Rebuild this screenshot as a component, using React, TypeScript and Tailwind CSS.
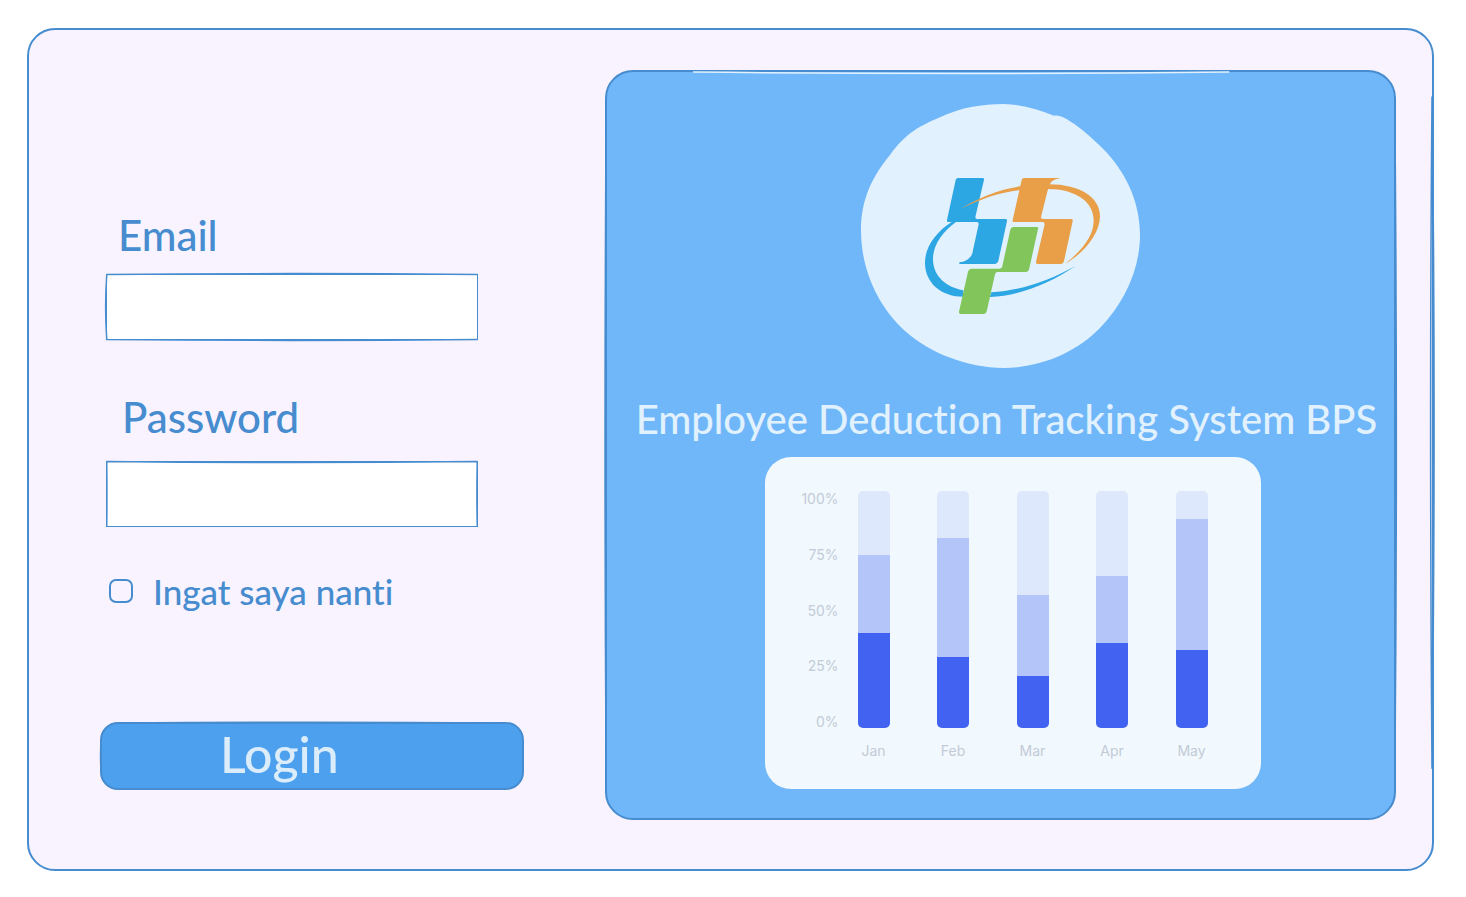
import type { ReactNode } from "react";

const MONTHS = [
  { label: "Jan", paid: 40, pending: 33 },
  { label: "Feb", paid: 30, pending: 50 },
  { label: "Mar", paid: 22, pending: 34 },
  { label: "Apr", paid: 36, pending: 28 },
  { label: "May", paid: 33, pending: 55 },
];

const TICKS = ["100%", "75%", "50%", "25%", "0%"];

/** Pencil strokes laid over a box's border, so that its edges look hand drawn. */
function Strokes({ d, color = "#468ccf", width = 1.5 }: { d: string; color?: string; width?: number }) {
  return (
    <svg
      aria-hidden="true"
      className="pointer-events-none absolute inset-0 h-full w-full overflow-visible"
      viewBox="0 0 1000 1000"
      preserveAspectRatio="none"
      fill="none"
      stroke={color}
      strokeWidth={width}
      strokeLinecap="round"
    >
      <path d={d} vectorEffect="non-scaling-stroke" />
    </svg>
  );
}

function Field({ id, label, type, strokes, className }: {
  id: string;
  label: ReactNode;
  type: string;
  strokes: string;
  className: string;
}) {
  return (
    <div className="flex flex-col">
      <label htmlFor={id} className={className}>
        {label}
      </label>
      <div className="relative ml-1.5 h-[66px] max-w-[372px]">
        <input
          id={id}
          type={type}
          className="h-full w-full border border-[#468ccf] bg-white px-4 text-2xl text-[#468ccf] outline-none"
        />
        <Strokes d={strokes} />
      </div>
    </div>
  );
}

function Logo() {
  return (
    <svg viewBox="33 27 837 792" className="h-[264px] w-[279px]" role="img" aria-label="BPS">
      <path
        fill="#e1f1fe"
        d="M462 27C515 29 565 43 612 62C630 58 650 72 672 86C705 110 740 140 772 175C835 245 870 330 870 420C870 525 822 622 752 697C680 772 572 819 460 819C350 817 245 777 165 708C80 630 33 520 33 405C33 310 70 240 120 180C160 125 195 98 270 67C330 38 395 27 462 27Z"
      />
      <g fill="#2da6e4">
        <path d="M325 249H398Q403 249 402 254L376 366Q376 372 381 372H466Q472 372 471 378L445 498Q442 507 435 507H328V502C350 499 367 488 369 465L386 388Q387 381 380 381H294Q290 381 291 375L317 255Q318 249 325 249Z" />
        <path d="M305 381C255 413 225 458 225 503C225 565 275 605 340 605V586C290 577 249 545 249 492C249 450 278 409 318 381Z" />
        <path d="M424 592C510 588 600 556 676 513C600 565 510 602 419 606Z" />
      </g>
      <g fill="#e89f48">
        <path d="M522 249H631C615 252 603 258 600 268L594 282L573 366Q573 372 579 372H663Q670 372 668 379L642 498Q640 507 632 507H563Q557 507 558 500L584 388Q584 381 577 381H492Q486 381 488 375L515 255Q516 249 522 249Z" />
        <path d="M332 341C380 312 450 281 513 274V285C450 291 390 314 332 341Z" />
        <path d="M596 268C692 268 750 309 750 363C750 418 700 475 645 507C700 463 731 422 731 376C731 322 680 282 592 282Z" />
      </g>
      <path
        fill="#82c55a"
        d="M490 396H560Q566 396 564 402L538 520Q536 531 527 531H442Q437 531 435 538L411 645Q409 657 400 657H332Q326 657 327 650L354 530Q357 521 365 521H447Q456 521 457 513L481 404Q483 396 490 396Z"
      />
    </svg>
  );
}

function Chart() {
  return (
    <div className="flex w-full max-w-[496px] gap-[19px] rounded-[26px] bg-[#f1f8fe] pt-8 pr-[53px] pb-7 pl-10 font-['Inter',sans-serif] text-sm leading-5 font-normal text-[#c3cbd6]">
      <div className="flex h-[243px] w-[34px] flex-col items-end justify-between">
        {TICKS.map((tick) => (
          <span key={tick}>{tick}</span>
        ))}
      </div>
      <div className="flex flex-1 justify-between pt-0.5">
        {MONTHS.map((month) => (
          <div key={month.label} className="flex w-8 flex-col items-center gap-[13px]">
            <div className="flex h-[237px] w-full flex-col justify-end overflow-hidden rounded-[5px] bg-[#dde8fc]">
              <div className="bg-[#b4c5f9]" style={{ height: `${month.pending}%` }} />
              <div className="bg-[#4263f1]" style={{ height: `${month.paid}%` }} />
            </div>
            <span>{month.label}</span>
          </div>
        ))}
      </div>
    </div>
  );
}

export default function App() {
  return (
    <div className="flex min-h-screen bg-white pt-7 pr-8 pb-[26px] pl-[27px] font-['Lato',sans-serif] font-medium [font-variant-ligatures:none]">
      <main className="relative grid flex-1 grid-cols-[576fr_791fr] rounded-[28px] border-2 border-[#468ccf] bg-[#f8f3fe] pt-10 pr-9 pb-[49px]">
        <Strokes d="M1000 80Q998 450 1000 880M1000 80Q1003 450 1000 880" />

        <form
          className="flex flex-col pt-[141px] pr-10 pl-[71px] text-[#468ccf]"
          onSubmit={(event) => event.preventDefault()}
        >
          <Field
            id="email"
            label="Email"
            type="email"
            className="mb-[15px] pl-[18px] text-[42px] leading-[48px]"
            strokes="M2 8Q500 -20 998 8M2 15Q-4 500 2 985M2 992Q500 1020 998 992"
          />
          <Field
            id="password"
            label="Password"
            type="password"
            className="mt-[53px] mb-5 pl-[22px] text-[42px] leading-[48px]"
            strokes="M2 8Q500 40 998 8M2 15Q3 500 2 985M998 15Q996 500 998 985"
          />
          <div className="mt-11 ml-[9px] flex items-center gap-5">
            <input
              id="remember"
              type="checkbox"
              className="h-6 w-6 appearance-none rounded-[7px] border-2 border-[#468ccf] checked:bg-[#468ccf]"
            />
            <label htmlFor="remember" className="text-[35px] leading-10">
              Ingat saya nanti
            </label>
          </div>
          <button
            type="submit"
            className="relative mt-[111px] h-[68px] max-w-[424px] rounded-[18px] border-2 border-[#468ccf] bg-[#4da0ed] pb-1 pl-[118px] text-left text-[50px] leading-[60px] text-[#dbecfb]"
          >
            Login
            <Strokes d="M40 -15Q500 -40 960 -15M-2 250Q-5 500 -2 750" />
          </button>
        </form>

        <section className="relative flex flex-col items-center rounded-[28px] border-2 border-[#468ccf] bg-[#70b7f9] pt-8 pb-7">
          <Strokes d="M-1 40Q-4 500 -1 960M1001 40Q1005 500 1001 960" />
          <Strokes d="M110 0Q450 4 790 0" color="#e1f1fe" />
          <Logo />
          <h1 className="mt-6 mb-[11px] pl-3 text-center text-[40px] leading-[54px] text-[#e1f1fe]">
            Employee Deduction Tracking System BPS
          </h1>
          <div className="flex w-full justify-center pl-6">
            <Chart />
          </div>
        </section>
      </main>
    </div>
  );
}
